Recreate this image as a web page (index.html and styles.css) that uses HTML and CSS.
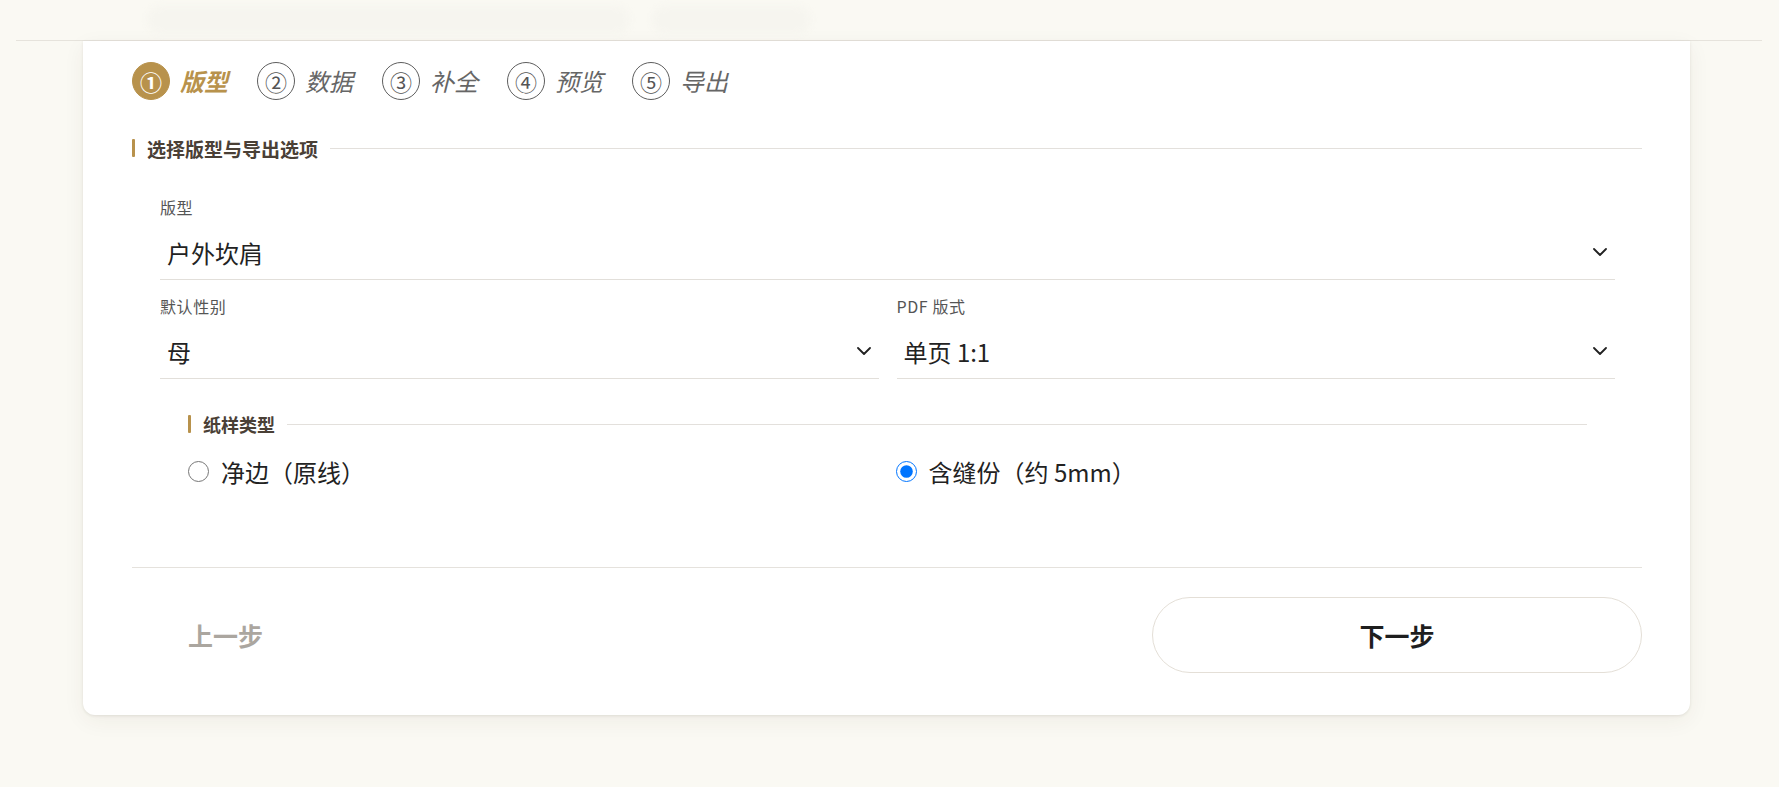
FILE: index.html
```html
<!DOCTYPE html>
<html lang="zh-CN">
<head>
<meta charset="utf-8">
<title>选择版型</title>
<link rel="stylesheet" href="styles.css">
</head>
<body>
<header class="topbar">
  <div class="ghost ghost-wide"></div>
  <div class="ghost ghost-narrow"></div>
</header>
<main class="card">
  <nav class="steps">
    <div class="step active"><span class="step-num">①</span><span class="step-label">版型</span></div>
    <div class="step"><span class="step-num">②</span><span class="step-label">数据</span></div>
    <div class="step"><span class="step-num">③</span><span class="step-label">补全</span></div>
    <div class="step"><span class="step-num">④</span><span class="step-label">预览</span></div>
    <div class="step"><span class="step-num">⑤</span><span class="step-label">导出</span></div>
  </nav>

  <div class="section-title"><span>选择版型与导出选项</span></div>

  <div class="form">
    <div class="field">
      <div class="field-label">版型</div>
      <div class="select"><span>户外坎肩</span>
        <svg class="chev" viewBox="0 0 14 8" width="14" height="8"><path d="M1 1l6 6 6-6" fill="none" stroke="#222" stroke-width="1.8" stroke-linecap="round" stroke-linejoin="round"/></svg>
      </div>
    </div>
    <div class="row">
      <div class="field">
        <div class="field-label">默认性别</div>
        <div class="select"><span>母</span>
          <svg class="chev" viewBox="0 0 14 8" width="14" height="8"><path d="M1 1l6 6 6-6" fill="none" stroke="#222" stroke-width="1.8" stroke-linecap="round" stroke-linejoin="round"/></svg>
        </div>
      </div>
      <div class="field">
        <div class="field-label">PDF 版式</div>
        <div class="select"><span>单页 1:1</span>
          <svg class="chev" viewBox="0 0 14 8" width="14" height="8"><path d="M1 1l6 6 6-6" fill="none" stroke="#222" stroke-width="1.8" stroke-linecap="round" stroke-linejoin="round"/></svg>
        </div>
      </div>
    </div>

    <div class="subsection">
      <div class="sub-title"><span>纸样类型</span></div>
      <div class="radios">
        <label class="radio"><input type="radio" name="kind"><span>净边（原线）</span></label>
        <label class="radio"><input type="radio" name="kind" checked><span>含缝份（约 5mm）</span></label>
      </div>
    </div>
  </div>

  <div class="actions">
    <button class="btn-prev" type="button">上一步</button>
    <button class="btn-next" type="button">下一步</button>
  </div>
</main>
</body>
</html>
```

FILE: styles.css
```css
html, body {
  margin: 0;
  padding: 0;
}

body {
  background: #faf9f3;
  font-family: "Noto Sans CJK SC", "Noto Sans", sans-serif;
  color: #222;
  height: 787px;
  overflow: hidden;
}

.topbar {
  height: 40px;
  margin: 0 17px 0 16px;
  border-bottom: 1px solid #e6e3dc;
  display: flex;
  align-items: center;
  gap: 22px;
  padding-left: 131px;
}

.ghost {
  height: 28px;
  border-radius: 14px;
  background: #f6f5ef;
  filter: blur(3px);
}

.ghost-wide { width: 483px; }
.ghost-narrow { width: 159px; }

.card {
  margin-left: 83px;
  width: 1607px;
  box-sizing: border-box;
  padding: 20px 48px 42px 49px;
  background: #fff;
  border-radius: 0 0 12px 12px;
  box-shadow: 0 1px 3px rgba(60, 50, 30, 0.10), 0 6px 22px rgba(60, 50, 30, 0.06);
}

/* steps */
.steps {
  display: flex;
  align-items: center;
  gap: 29px;
  height: 39px;
}

.step {
  display: flex;
  align-items: center;
  gap: 10px;
}

.step-num {
  width: 38px;
  height: 38px;
  box-sizing: border-box;
  border: 1px solid #5e5e5e;
  border-radius: 50%;
  display: flex;
  align-items: center;
  justify-content: center;
  font-size: 22px;
  line-height: 1;
  color: #555;
}

.step-label {
  font-size: 24px;
  line-height: 1;
  font-style: italic;
  color: #666;
}

.step.active .step-num {
  background: #b8924c;
  border-color: #b8924c;
  color: #fff;
  font-weight: 700;
}

.step.active .step-label {
  color: #b8924c;
  font-weight: 700;
}

/* section title */
.section-title,
.sub-title {
  display: flex;
  align-items: center;
  height: 24px;
  font-size: 19px;
  font-weight: 700;
  color: #4a4036;
}

.section-title {
  margin-top: 36px;
}

.section-title::before,
.sub-title::before {
  content: "";
  width: 3px;
  height: 18px;
  background: #b8924c;
  border-radius: 1px;
  margin-right: 12px;
}

.section-title::after,
.sub-title::after {
  content: "";
  flex: 1;
  height: 1px;
  background: #e3e0dc;
  margin-left: 12px;
}

/* form */
.form {
  padding: 0 27px 0 28px;
  margin-top: 37px;
}

.field-label {
  font-size: 16px;
  line-height: 20px;
  color: #555;
  letter-spacing: 0.6px;
  margin-bottom: 4px;
}

.select {
  height: 59px;
  box-sizing: border-box;
  border-bottom: 1px solid #e2dfda;
  display: flex;
  align-items: center;
  justify-content: space-between;
  padding: 4px 8px 0 7px;
  font-size: 24px;
  color: #222;
}

.chev {
  display: block;
  flex: none;
}

.row {
  display: grid;
  grid-template-columns: 1fr 1fr;
  gap: 18px;
  margin-top: 16px;
}

.subsection {
  margin: 33px 28px 0;
}

.sub-title {
  font-size: 18px;
}

.radios {
  display: grid;
  grid-template-columns: 1fr 1fr;
  gap: 16px;
  margin-top: 18px;
  height: 30px;
}

.radio {
  display: flex;
  align-items: center;
  gap: 12px;
  font-size: 24px;
  color: #222;
}

.radio input {
  width: 21px;
  height: 21px;
  margin: 0;
  flex: none;
}

/* actions */
.actions {
  margin-top: 83px;
  border-top: 1px solid #e5e2dd;
  padding-top: 29px;
  display: flex;
  justify-content: space-between;
  align-items: center;
}

.btn-prev,
.btn-next {
  font-family: "Noto Sans CJK SC", "Noto Sans", sans-serif;
  font-size: 25px;
  font-weight: 700;
  height: 76px;
  cursor: pointer;
}

.btn-prev {
  background: none;
  border: none;
  padding: 0 0 0 56px;
  color: #aba69f;
}

.btn-next {
  width: 490px;
  background: #fff;
  border: 1px solid #e4dfd7;
  border-radius: 38px;
  color: #1e1e1e;
}
```
